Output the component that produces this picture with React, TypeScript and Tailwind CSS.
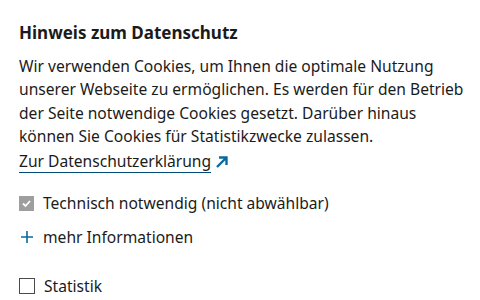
export default function App() {
  return (
    <div className="w-[480px] h-[300px] overflow-hidden bg-white text-[#1b1b1b] font-['Noto_Sans',sans-serif]">
      <div className="px-[19px] pt-[21px]">
        <h2 className="text-[17px] leading-[24px] font-bold">Hinweis zum Datenschutz</h2>
        <p className="mt-[10px] whitespace-nowrap text-[15.6px] leading-[23.3px]">
          Wir verwenden Cookies, um Ihnen die optimale Nutzung
          <br />
          unserer Webseite zu ermöglichen. Es werden für den Betrieb
          <br />
          der Seite notwendige Cookies gesetzt. Darüber hinaus
          <br />
          können Sie Cookies für Statistikzwecke zulassen.
        </p>
        <a href="#" className="mt-[2px] inline-flex items-center gap-[4px] text-[15.6px] leading-[23px]">
          <span className="border-b border-[#004b76] leading-[22px]">Zur Datenschutzerklärung</span>
          <svg width="14" height="14" viewBox="0 0 14 14" className="text-[#0a6a9c]">
            <path d="M2 12 L11 3 M4 2.5 H11.5 V10" fill="none" stroke="currentColor" strokeWidth="2.4" />
          </svg>
        </a>
        <div className="mt-[18px] flex items-center gap-[9px] text-[15.6px] leading-[24px]">
          <span className="flex h-[15px] w-[15px] items-center justify-center bg-[#9e9e9e]">
            <svg width="11" height="11" viewBox="0 0 11 11">
              <path d="M2 5.5 L4.5 8 L9 3" fill="none" stroke="white" strokeWidth="1.8" />
            </svg>
          </span>
          <span>Technisch notwendig (nicht abwählbar)</span>
        </div>
        <div className="mt-[10px] flex items-center gap-[9px] text-[15.6px] leading-[24px]">
          <span className="flex h-[15px] w-[15px] items-center justify-center">
            <svg width="14" height="14" viewBox="0 0 14 14">
              <path d="M7 1 V13 M1 7 H13" fill="none" stroke="#0a6a9c" strokeWidth="1.6" />
            </svg>
          </span>
          <span>mehr Informationen</span>
        </div>
        <div className="mt-[25px] flex items-center gap-[9px] text-[15.6px] leading-[24px]">
          <span className="h-[16px] w-[16px] border border-[#4a4a4a] bg-white" />
          <span>Statistik</span>
        </div>
      </div>
    </div>
  );
}
